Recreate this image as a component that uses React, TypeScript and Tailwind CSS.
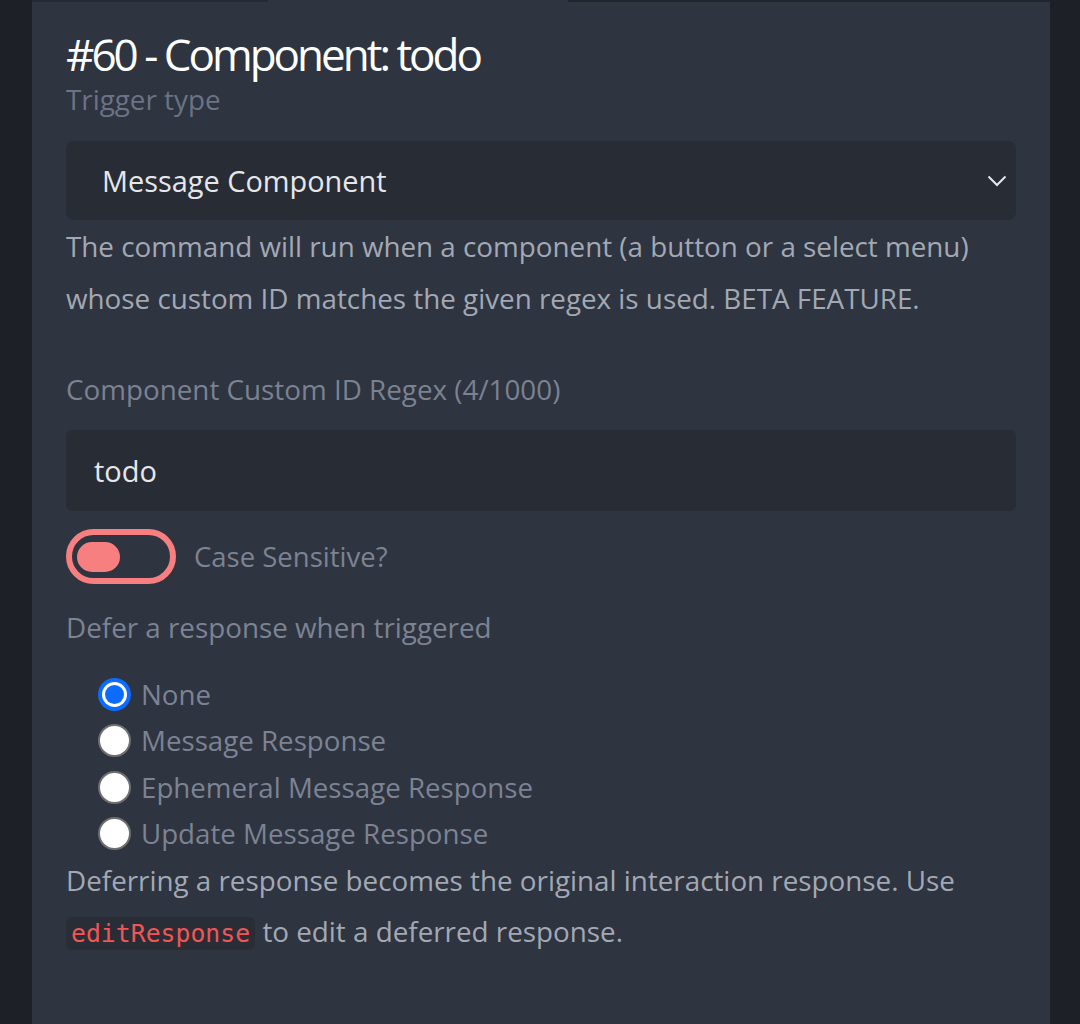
import React from "react";

const font = { fontFamily: '"Open Sans", "Noto Sans", sans-serif' };

function Radio({ checked, label }: { checked?: boolean; label: string }) {
  return (
    <div className="flex items-center h-[46.33px]">
      {checked ? (
        <div className="ml-[32px] w-[33px] h-[33px] rounded-full bg-[#0b6cff] flex items-center justify-center">
          <div className="w-[25px] h-[25px] rounded-full bg-white flex items-center justify-center">
            <div className="w-[19px] h-[19px] rounded-full bg-[#0b6cff]" />
          </div>
        </div>
      ) : (
        <div className="ml-[32px] w-[33px] h-[33px] rounded-full bg-white border-[2px] border-[#6f6f6f]" />
      )}
      <span className="ml-[10px] text-[27.7px] text-[#7c8393]">{label}</span>
    </div>
  );
}

export default function App() {
  return (
    <div className="w-[1080px] h-[1024px] bg-[#1e2028] flex overflow-hidden" style={font}>
      <div className="ml-[32px] w-[1018px] h-full bg-[#2e3440] flex flex-col">
        <div className="h-[2px] flex">
          <div className="w-[236px] bg-[#262a33]" />
          <div className="w-[300px]" />
          <div className="flex-1 bg-[#22252c]" />
        </div>
        <div className="px-[34px] flex flex-col">
          <h1 className="mt-[28px] text-[44px] leading-[48px] text-white tracking-[-3px]">#60 - Component: todo</h1>
          <div className="mt-[3px] text-[27.8px] leading-[36px] text-[#6b7385]">Trigger type</div>
          <div className="mt-[24px] h-[79px] rounded-[8px] bg-[#282c35] flex items-center pl-[36px] pr-[9px]">
            <span className="flex-1 text-[28.9px] text-[#e6e7ea]">Message Component</span>
            <svg width="20" height="12" viewBox="0 0 20 12" fill="none">
              <path d="M1.5 1.5 L10 10 L18.5 1.5" stroke="#e6e7ea" strokeWidth="2" />
            </svg>
          </div>
          <p className="mt-[0px] text-[27.8px] leading-[52px] text-[#a3a9b4]">
            The command will run when a component (a button or a select menu) whose custom ID matches the given regex is used. BETA FEATURE.
          </p>
          <div className="mt-[47px] text-[27.8px] leading-[36px] text-[#7b8291]">Component Custom ID Regex (4/1000)</div>
          <div className="mt-[23px] h-[81px] rounded-[6px] bg-[#282c35] flex items-center pl-[28px]">
            <span className="text-[29px] text-[#e6e7ea]">todo</span>
          </div>
          <div className="mt-[18px] flex items-center">
            <div className="w-[110px] h-[55px] rounded-full border-[6px] border-[#f87f7f] flex items-center pl-[5px]">
              <div className="w-[43px] h-[30px] rounded-full bg-[#f87f7f]" />
            </div>
            <span className="ml-[18px] text-[27.5px] text-[#7c8393]">Case Sensitive?</span>
          </div>
          <div className="mt-[25px] text-[27.8px] leading-[36px] text-[#7c8393]">Defer a response when triggered</div>
          <div className="mt-[26.5px] flex flex-col">
            <Radio checked label="None" />
            <Radio label="Message Response" />
            <Radio label="Ephemeral Message Response" />
            <Radio label="Update Message Response" />
          </div>
          <p className="text-[27.8px] leading-[51px] text-[#a3a9b4] -mt-[2px]">
            Deferring a response becomes the original interaction response. Use{" "}
            <code
              className="bg-[#292d36] rounded-[6px] px-[5px] py-[2px] text-[#f25555] text-[24.8px]"
              style={{ fontFamily: '"DejaVu Sans Mono", monospace' }}
            >
              editResponse
            </code>{" "}
            to edit a deferred response.
          </p>
        </div>
      </div>
    </div>
  );
}
